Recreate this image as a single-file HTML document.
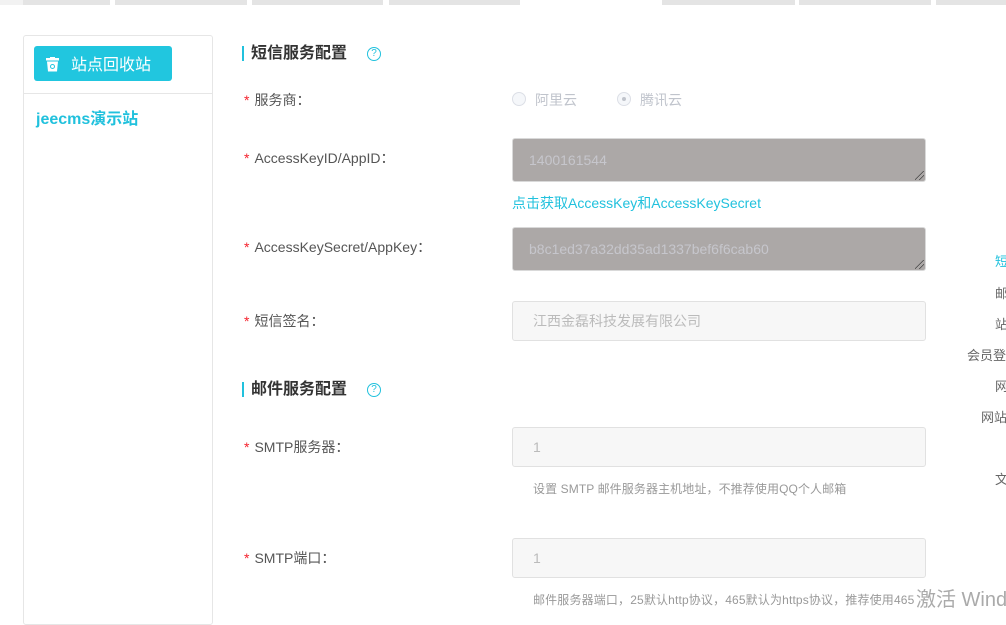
<!DOCTYPE html>
<html><head><meta charset="utf-8"><style>
*{margin:0;padding:0;box-sizing:border-box}
body{width:1006px;height:613px;overflow:hidden;background:#fff;font-family:"Liberation Sans","Noto Sans CJK SC",sans-serif;position:relative;color:#555}
.a{position:absolute}
.tab{position:absolute;top:0;height:5px;background:#e4e4e4}
.lbl{position:absolute;font-size:14px;color:#555;white-space:nowrap}
.lbl b{color:#f5222d;font-weight:normal;margin-right:5px}
.inp{position:absolute;left:512px;width:414px;border:1px solid #e1e1e1;border-radius:3px;background:#f7f7f7;font-size:14px;color:#bbb;padding-left:20px}
.ta{background:#aca8a7;border-color:#d9d9d9;color:#c6c6cc}
.sec{position:absolute;left:242px;font-size:16px;font-weight:bold;color:#333;border-left:2px solid #21c1dd;padding-left:7px;line-height:15px}
.q{position:absolute;width:14px;height:14px;border:1px solid #21c1dd;border-radius:50%;color:#21c1dd;font-size:10px;text-align:center;line-height:12px}
.hint{position:absolute;left:533px;font-size:12px;color:#999;white-space:nowrap;letter-spacing:0.1px}
.side{position:absolute;font-size:13px;color:#666;white-space:nowrap}
.grip{position:absolute;right:1px;bottom:1px;width:9px;height:9px;background:linear-gradient(135deg,transparent 45%,#444 45%,#444 52%,transparent 52%,transparent 70%,#444 70%,#444 77%,transparent 77%)}
</style></head><body>
<div class="tab" style="left:0;width:23px;background:#f2f2f2"></div>
<div class="tab" style="left:23px;width:87px"></div>
<div class="tab" style="left:115px;width:132px"></div>
<div class="tab" style="left:252px;width:131px"></div>
<div class="tab" style="left:389px;width:131px"></div>
<div class="tab" style="left:662px;width:133px"></div>
<div class="tab" style="left:799px;width:132px"></div>
<div class="tab" style="left:936px;width:70px"></div>

<div class="a" style="left:23px;top:35px;width:190px;height:590px;border:1px solid #e6e6e6;border-radius:3px"></div>
<div class="a" style="left:24px;top:93px;width:188px;height:1px;background:#e6e6e6"></div>
<div class="a" style="left:34px;top:46px;width:138px;height:35px;background:#21c6df;border-radius:3px;color:#fff;font-size:16px;line-height:39px;padding-left:37px">站点回收站</div>
<svg class="a" style="left:46px;top:57px" width="13" height="15" viewBox="0 0 13 15"><rect x="0" y="1" width="13" height="2.5" fill="#fff"/><rect x="4" y="0" width="5" height="2" fill="#fff"/><path d="M1 4.5h11l-1 10H2z" fill="#fff"/><circle cx="6.5" cy="9.5" r="2" fill="none" stroke="#21c6df" stroke-width="1"/></svg>
<div class="a" style="left:36px;top:105px;font-size:16px;font-weight:bold;color:#21c1dd">jeecms演示站</div>

<div class="sec" style="top:46px">短信服务配置</div>
<div class="q" style="left:367px;top:47px">?</div>
<div class="lbl" style="left:244px;top:90px"><b>*</b>服务商：</div>
<div class="a" style="left:512px;top:92px;width:14px;height:14px;border:1px solid #dcdfe6;border-radius:50%;background:#f5f7fa"></div>
<div class="a" style="left:535px;top:90px;font-size:14px;color:#c0c4cc">阿里云</div>
<div class="a" style="left:617px;top:92px;width:14px;height:14px;border:1px solid #dcdfe6;border-radius:50%;background:#f5f7fa"></div>
<div class="a" style="left:622px;top:97px;width:4px;height:4px;border-radius:50%;background:#c0c4cc"></div>
<div class="a" style="left:640px;top:90px;font-size:14px;color:#c0c4cc">腾讯云</div>

<div class="lbl" style="left:244px;top:148px"><b>*</b>AccessKeyID/AppID：</div>
<div class="inp ta" style="top:138px;height:44px;line-height:42px;padding-left:16px">1400161544<div class="grip"></div></div>
<div class="a" style="left:512px;top:193px;font-size:14px;color:#21c1dd">点击获取AccessKey和AccessKeySecret</div>

<div class="lbl" style="left:244px;top:237px"><b>*</b>AccessKeySecret/AppKey：</div>
<div class="inp ta" style="top:227px;height:44px;line-height:42px;padding-left:16px">b8c1ed37a32dd35ad1337bef6f6cab60<div class="grip"></div></div>

<div class="lbl" style="left:244px;top:311px"><b>*</b>短信签名：</div>
<div class="inp" style="top:301px;height:40px;line-height:38px">江西金磊科技发展有限公司</div>

<div class="sec" style="top:382px">邮件服务配置</div>
<div class="q" style="left:367px;top:383px">?</div>

<div class="lbl" style="left:244px;top:437px"><b>*</b>SMTP服务器：</div>
<div class="inp" style="top:427px;height:40px;line-height:38px">1</div>
<div class="hint" style="top:480px">设置 SMTP 邮件服务器主机地址，不推荐使用QQ个人邮箱</div>

<div class="lbl" style="left:244px;top:548px"><b>*</b>SMTP端口：</div>
<div class="inp" style="top:538px;height:40px;line-height:38px">1</div>
<div class="hint" style="top:591px;letter-spacing:0.15px">邮件服务器端口，25默认http协议，465默认为https协议，推荐使用465</div>

<div class="side" style="left:995px;top:251px;color:#21c1dd">短信</div>
<div class="side" style="left:995px;top:283px">邮件</div>
<div class="side" style="left:995px;top:314px">站点</div>
<div class="side" style="left:967px;top:345px">会员登录</div>
<div class="side" style="left:995px;top:376px">网站</div>
<div class="side" style="left:981px;top:407px">网站设置</div>
<div class="side" style="left:995px;top:469px">文本</div>
<div class="a" style="left:916px;top:583px;font-size:20px;color:#aaa;white-space:nowrap">激活 Windows</div>
</body></html>
